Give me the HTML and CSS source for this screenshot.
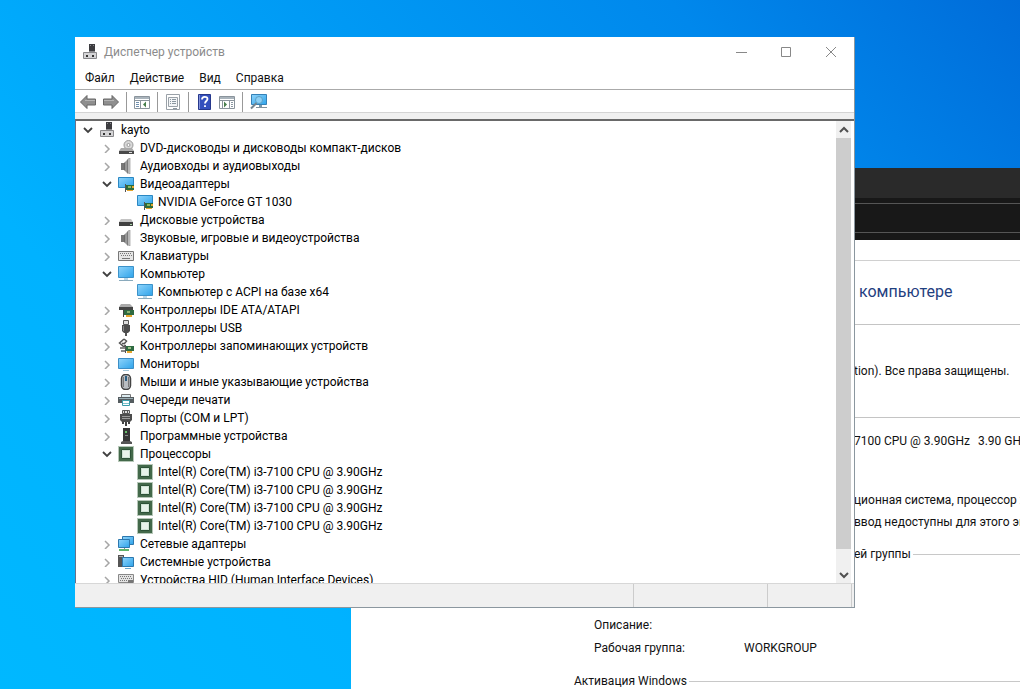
FILE: index.html
```html
<!DOCTYPE html>
<html lang="ru">
<head>
<meta charset="utf-8">
<title>Диспетчер устройств</title>
<link rel="stylesheet" href="styles.css">
</head>
<body>
<svg class="sprite" aria-hidden="true">
  <defs>
    <linearGradient id="screen" x1="0" y1="0" x2="1" y2="1"><stop offset="0" stop-color="#8fd4fb"/><stop offset="1" stop-color="#2ea3ea"/></linearGradient>
    <linearGradient id="metal" x1="0" y1="0" x2="1" y2="0"><stop offset="0" stop-color="#555"/><stop offset=".5" stop-color="#aaa"/><stop offset="1" stop-color="#666"/></linearGradient>
  </defs>
  <symbol id="i-manager" viewBox="0 0 16 16"><path fill="#3c3c40" d="M7 0h6v7H7z"/><path fill="#88888b" d="M8 1h1v1H8zM11 1h1v1h-1z"/><path fill="#8b8b8e" d="M7 7h6v2H7z"/><path fill="#d4d4d6" stroke="#88888b" d="M1.500 8.500h13v6h-13z"/><path fill="#333" d="M4 11h2v2H4zM10 11h2v2h-2z"/></symbol>
  <symbol id="i-dvd" viewBox="0 0 16 16"><circle cx="10.500" cy="5" r="4.500" fill="#d8d8d8" stroke="#999"/><circle cx="10.500" cy="5" r="1.500" fill="#fff" stroke="#999"/><path fill="#aaa" d="M3 8h11l2 3H1z"/><path fill="#4a4a4a" d="M1 11h15v3H1z"/><path fill="#ddd" d="M11 12h3v1h-3z"/></symbol>
  <symbol id="i-sound" viewBox="0 0 16 16"><path fill="#777" d="M3 5h3v7H3z"/><path fill="url(#metal)" d="M6 5l4-4v15l-4-4z"/><path fill="#ccc" stroke="#888" stroke-width=".6" d="M10 1l2-1v16l-2-1z"/></symbol>
  <symbol id="i-video" viewBox="0 0 16 16"><path fill="url(#screen)" stroke="#2b87c2" d="M.5 1.500h15v10H.5z"/><path fill="#2d6b3a" d="M8 9h8v5H8z"/><path fill="#8db763" d="M10 10h3v2h-3z"/><path fill="#e6a52d" d="M9 14h6v1H9zM14 10h2v2h-2z"/><path fill="#555" d="M7 8h1v8H7z"/></symbol>
  <symbol id="i-disk" viewBox="0 0 16 16"><path fill="#c3c3c3" d="M3 7h10l2 3H1z"/><path fill="#414141" d="M1 10h14v4H1z"/><path fill="#a8d6a8" d="M12 12h2v1h-2z"/></symbol>
  <symbol id="i-keyboard" viewBox="0 0 16 16"><path fill="#e6e6e6" stroke="#777" d="M.5 3.500h15v9H.5z"/><path stroke="#777" stroke-dasharray="1 1" d="M2 5.500h12M3 7.500h11"/><path stroke="#777" d="M4 10.500h8"/></symbol>
  <symbol id="i-computer" viewBox="0 0 16 16"><path fill="url(#screen)" stroke="#3c92c9" d="M.5.5h15v11H.5z"/><path fill="#bad7e8" d="M6 12h4v2H6z"/><path stroke="#8aaabc" d="M1 14.500h14"/></symbol>
  <symbol id="i-ide" viewBox="0 0 16 16"><path fill="#aaa" d="M3 2h9l3 3H1z"/><path fill="#444" d="M1 5h14v3H1z"/><path fill="#2f6b42" d="M6 8h10v5H6z"/><path fill="#88b071" d="M9 9h3v2H9z"/><path fill="#e6a52d" d="M8 13h6v2H8z"/><path fill="#444" d="M5 7h1v8H5z"/></symbol>
  <symbol id="i-usb" viewBox="0 0 16 16"><path fill="#ddd" stroke="#555" d="M5.500.5h5v4h-5z"/><path fill="#4c4c4c" d="M4 5h8v6l-2 2H6l-2-2z"/><path fill="#888" d="M5 6h1v5H5z"/><path fill="#555" d="M7 13h2v3H7z"/></symbol>
  <symbol id="i-storage" viewBox="0 0 16 16"><path fill="#eee" stroke="#555" stroke-width="1.500" d="M6 1L1.500 5 6 9l1.500-2M6 1l2.500 2-2 2.500H4"/><path fill="#888" d="M2 9h5v2H2zM3 12h4v2H3z"/><path fill="#2f6b42" d="M7 8h9v5H7z"/><path fill="#9bc083" d="M10 9h3v2h-3z"/><path fill="#e6a52d" d="M9 13h5v2H9z"/><path fill="#555" d="M7 7h1v8H7z"/></symbol>
  <symbol id="i-monitor" viewBox="0 0 16 16"><path fill="url(#screen)" stroke="#3c8ec6" d="M.5 2.500h15v10H.5z"/><path stroke="#a4c7da" d="M5 14.500h6"/></symbol>
  <symbol id="i-mouse" viewBox="0 0 16 16"><rect x="3.500" y=".5" width="9" height="15" rx="4" fill="#b9bdc2" stroke="#444" stroke-width="1.500"/><path fill="none" stroke="#777" d="M5.500 3v10M10.500 3v10"/><path stroke="#2c5e82" stroke-width="2" d="M8 2v5"/></symbol>
  <symbol id="i-printer" viewBox="0 0 16 16"><path fill="#dcebf0" stroke="#777" d="M3.500 2.500h9v4h-9z"/><path fill="#555c60" d="M0 5h16v6H0z"/><path fill="#9aaeb5" d="M1 6h14v1H1z"/><path fill="#fff" stroke="#3b9caa" d="M4.500 8.500h7v5h-7z"/><path stroke="#7cc4cf" d="M5 11.500h6"/></symbol>
  <symbol id="i-port" viewBox="0 0 16 16"><path fill="#ddd" stroke="#555" d="M4.500.5h7v3h-7z"/><path stroke="#555" d="M6.500 1v2M9.500 1v2"/><path fill="#4c4c4c" d="M2 4h12v6l-2 2H4l-2-2z"/><path fill="#999" d="M4 6h8v1H4zM4 8h8v1H4z"/><path fill="#444" d="M4 12h2v2H4zM7 12h2v4H7zM10 12h2v2h-2z"/></symbol>
  <symbol id="i-software" viewBox="0 0 16 16"><path fill="#353535" d="M5 0h7v13H5z"/><path fill="#67bc69" d="M7 3h2v2H7z"/><path fill="#888" d="M7 7h3v1H7z"/><path fill="#555" d="M3 14l2-1h7l2 1v2H3z"/></symbol>
  <symbol id="i-cpu" viewBox="0 0 16 16"><path fill="none" stroke="#6d8f70" stroke-dasharray="1 1" d="M.5.5h15v15H.5z"/><path fill="#43694a" d="M1 1h14v14H1z"/><path fill="#cfe3d4" stroke="#2d5237" d="M3.500 3.500h9v9h-9z"/><path fill="#e8f3ea" d="M5 5h6v6H5z"/></symbol>
  <symbol id="i-network" viewBox="0 0 16 16"><path fill="url(#screen)" stroke="#2d78ae" d="M4.500.5h11v8h-11z"/><path fill="url(#screen)" stroke="#2d78ae" d="M.5 3.500h11v8H.5z"/><path fill="#888" d="M6 12h1v2H6z"/><path stroke="#5fb46a" stroke-width="2" d="M1 14h10"/></symbol>
  <symbol id="i-system" viewBox="0 0 16 16"><path fill="#555" d="M0 1h6v12H0z"/><path fill="#aaa" d="M1 2h4v1H1z"/><path fill="url(#screen)" stroke="#2d78ae" d="M4.500 3.500h11v9h-11z"/><path stroke="#69a7ce" d="M7 14.500h6"/></symbol>
  <symbol id="i-hid" viewBox="0 0 16 16"><path fill="#e3e3e3" stroke="#888" d="M.5 2.500h15v8H.5z"/><path stroke="#777" stroke-dasharray="1 1" d="M2 4.500h12M3 6.500h11M2 8.500h12"/><path fill="#777" d="M10 8h5v7h-5z"/></symbol>
  <symbol id="i-open" viewBox="0 0 10 10"><path fill="none" stroke="#404040" stroke-width="1.800" d="M1 3l4 4 4-4"/></symbol>
  <symbol id="i-closed" viewBox="0 0 10 10"><path fill="none" stroke="#a6a6a6" stroke-width="1.500" d="M3 2l4 4-4 4"/></symbol>
  <symbol id="i-back" viewBox="0 0 16 16"><path fill="#8f8f8f" stroke="#666" d="M.5 8L7 1.500V5h8.500v6H7v3.500z"/><path stroke="#b5b5b5" d="M5 6.500h10"/></symbol>
  <symbol id="i-forward" viewBox="0 0 16 16"><path fill="#8f8f8f" stroke="#666" d="M15.500 8L9 1.500V5H.5v6H9v3.500z"/><path stroke="#b5b5b5" d="M1 6.500h10"/></symbol>
  <symbol id="i-tree" viewBox="0 0 16 16"><path fill="#fff" stroke="#8a949c" d="M.5 2.500h15v12H.5z"/><path fill="#aab4bc" d="M1 3h14v2H1z"/><path stroke="#8a949c" d="M1 6.500h14M6.500 7v7"/><path stroke="#6f8fae" d="M2 8.500h3M2 10.500h3M2 12.500h3"/><path fill="#477f4b" d="M9 10.500l3-3v6z"/></symbol>
  <symbol id="i-action" viewBox="0 0 16 16"><path fill="#fff" stroke="#8a949c" d="M.5 2.500h15v12H.5z"/><path fill="#aab4bc" d="M1 3h14v2H1z"/><path stroke="#8a949c" d="M1 6.500h14M10.500 7v7M3.500 7v7"/><path stroke="#8b98a2" d="M12 8.500h2M12 10.500h2M12 12.500h2"/><path fill="#477f4b" d="M8 10.500l-3-3v6z"/></symbol>
  <symbol id="i-properties" viewBox="0 0 16 16"><path fill="#fff" stroke="#9aa1a8" d="M1.500.5h13v15h-13z"/><path fill="#f3f5f7" stroke="#9aa1a8" d="M3.500 3.500h9v9h-9z"/><path stroke="#8a96a0" d="M5 5.500h1M7 5.500h4M5 7.500h1M7 7.500h4M5 9.500h1M7 9.500h4M8 14.500h4"/></symbol>
  <symbol id="i-help" viewBox="0 0 16 16"><path fill="#3450bd" stroke="#26388c" d="M2.500.5h12v15h-12z"/><path stroke="#8393dc" d="M3.500 1v14"/><path fill="none" stroke="#fff" stroke-width="1.800" d="M6 5.500C6 2 11.500 2 11.500 5c0 2-2.500 2-2.500 4.500M9 11.200v1.800"/></symbol>
  <symbol id="i-scan" viewBox="0 0 18 16"><path fill="url(#screen)" stroke="#3481b7" d="M1.500.5h15v10h-15z"/><path fill="#7a98aa" d="M9 11h3v2H9z"/><path stroke="#81919b" d="M6 13.500h11"/><circle cx="9" cy="6" r="3.500" fill="#8dd0f5" stroke="#5b9fc5"/><path stroke="#74848e" stroke-width="2" d="M6.500 9L1 14.500"/></symbol>
</svg>

<main class="desktop">
  <section class="about" aria-label="Система">
    <div class="about-tabs"></div>
    <div class="about-tools"><div class="about-address"></div></div>
    <div class="about-body">
      <h2 class="about-title">компьютере</h2>
      <p class="about-edition">tion). Все права защищены.</p>
      <div class="about-system">
        <p class="about-cpu"><span>7100 CPU @ 3.90GHz</span><span>3.90 GHz</span></p>
        <p class="about-line">ционная система, процессор x</p>
        <p class="about-line">ввод недоступны для этого экр</p>
      </div>
      <h3 class="about-group about-group-name">ей группы</h3>
      <dl class="about-facts">
        <dt>Описание:</dt><dd></dd>
        <dt>Рабочая группа:</dt><dd>WORKGROUP</dd>
      </dl>
      <h3 class="about-group">Активация Windows</h3>
    </div>
  </section>

  <section class="window" aria-label="Диспетчер устройств">
    <header class="titlebar">
      <svg class="icon"><use href="#i-manager"/></svg>
      <h1 class="title">Диспетчер устройств</h1>
      <div class="controls">
        <button class="control" aria-label="Свернуть"><svg class="glyph" viewBox="0 0 12 12"><path d="M1 6.500h11"/></svg></button>
        <button class="control" aria-label="Развернуть"><svg class="glyph" viewBox="0 0 12 12"><path d="M1.500 1.500h9v9h-9z"/></svg></button>
        <button class="control" aria-label="Закрыть"><svg class="glyph" viewBox="0 0 12 12"><path d="M1 1l10 10M11 1L1 11"/></svg></button>
      </div>
    </header>
    <nav class="menu">
      <button class="menu-item">Файл</button>
      <button class="menu-item">Действие</button>
      <button class="menu-item">Вид</button>
      <button class="menu-item">Справка</button>
    </nav>
    <div class="toolbar">
      <button class="tool" aria-label="Назад"><svg class="icon"><use href="#i-back"/></svg></button>
      <button class="tool" aria-label="Вперед"><svg class="icon"><use href="#i-forward"/></svg></button>
      <span class="divider"></span>
      <button class="tool" aria-label="Дерево консоли"><svg class="icon"><use href="#i-tree"/></svg></button>
      <span class="divider"></span>
      <button class="tool" aria-label="Свойства"><svg class="icon"><use href="#i-properties"/></svg></button>
      <span class="divider"></span>
      <button class="tool" aria-label="Справка"><svg class="icon"><use href="#i-help"/></svg></button>
      <button class="tool" aria-label="Панель действий"><svg class="icon"><use href="#i-action"/></svg></button>
      <span class="divider"></span>
      <button class="tool" aria-label="Обновить конфигурацию оборудования"><svg class="icon icon-wide"><use href="#i-scan"/></svg></button>
    </div>
    <div class="pane">
      <ul class="tree">
        <li><div class="row"><button class="toggle" aria-label="Свернуть"><svg class="chevron"><use href="#i-open"/></svg></button><svg class="icon"><use href="#i-manager"/></svg><span>kayto</span></div>
          <ul class="branch">
            <li><div class="row"><button class="toggle" aria-label="Развернуть"><svg class="chevron"><use href="#i-closed"/></svg></button><svg class="icon"><use href="#i-dvd"/></svg><span>DVD-дисководы и дисководы компакт-дисков</span></div></li>
            <li><div class="row"><button class="toggle" aria-label="Развернуть"><svg class="chevron"><use href="#i-closed"/></svg></button><svg class="icon"><use href="#i-sound"/></svg><span>Аудиовходы и аудиовыходы</span></div></li>
            <li><div class="row"><button class="toggle" aria-label="Свернуть"><svg class="chevron"><use href="#i-open"/></svg></button><svg class="icon"><use href="#i-video"/></svg><span>Видеоадаптеры</span></div>
              <ul class="branch">
                <li><div class="row row-leaf"><svg class="icon"><use href="#i-video"/></svg><span>NVIDIA GeForce GT 1030</span></div></li>
              </ul></li>
            <li><div class="row"><button class="toggle" aria-label="Развернуть"><svg class="chevron"><use href="#i-closed"/></svg></button><svg class="icon"><use href="#i-disk"/></svg><span>Дисковые устройства</span></div></li>
            <li><div class="row"><button class="toggle" aria-label="Развернуть"><svg class="chevron"><use href="#i-closed"/></svg></button><svg class="icon"><use href="#i-sound"/></svg><span>Звуковые, игровые и видеоустройства</span></div></li>
            <li><div class="row"><button class="toggle" aria-label="Развернуть"><svg class="chevron"><use href="#i-closed"/></svg></button><svg class="icon"><use href="#i-keyboard"/></svg><span>Клавиатуры</span></div></li>
            <li><div class="row"><button class="toggle" aria-label="Свернуть"><svg class="chevron"><use href="#i-open"/></svg></button><svg class="icon"><use href="#i-computer"/></svg><span>Компьютер</span></div>
              <ul class="branch">
                <li><div class="row row-leaf"><svg class="icon"><use href="#i-computer"/></svg><span>Компьютер с ACPI на базе x64</span></div></li>
              </ul></li>
            <li><div class="row"><button class="toggle" aria-label="Развернуть"><svg class="chevron"><use href="#i-closed"/></svg></button><svg class="icon"><use href="#i-ide"/></svg><span>Контроллеры IDE ATA/ATAPI</span></div></li>
            <li><div class="row"><button class="toggle" aria-label="Развернуть"><svg class="chevron"><use href="#i-closed"/></svg></button><svg class="icon"><use href="#i-usb"/></svg><span>Контроллеры USB</span></div></li>
            <li><div class="row"><button class="toggle" aria-label="Развернуть"><svg class="chevron"><use href="#i-closed"/></svg></button><svg class="icon"><use href="#i-storage"/></svg><span>Контроллеры запоминающих устройств</span></div></li>
            <li><div class="row"><button class="toggle" aria-label="Развернуть"><svg class="chevron"><use href="#i-closed"/></svg></button><svg class="icon"><use href="#i-monitor"/></svg><span>Мониторы</span></div></li>
            <li><div class="row"><button class="toggle" aria-label="Развернуть"><svg class="chevron"><use href="#i-closed"/></svg></button><svg class="icon"><use href="#i-mouse"/></svg><span>Мыши и иные указывающие устройства</span></div></li>
            <li><div class="row"><button class="toggle" aria-label="Развернуть"><svg class="chevron"><use href="#i-closed"/></svg></button><svg class="icon"><use href="#i-printer"/></svg><span>Очереди печати</span></div></li>
            <li><div class="row"><button class="toggle" aria-label="Развернуть"><svg class="chevron"><use href="#i-closed"/></svg></button><svg class="icon"><use href="#i-port"/></svg><span>Порты (COM и LPT)</span></div></li>
            <li><div class="row"><button class="toggle" aria-label="Развернуть"><svg class="chevron"><use href="#i-closed"/></svg></button><svg class="icon"><use href="#i-software"/></svg><span>Программные устройства</span></div></li>
            <li><div class="row"><button class="toggle" aria-label="Свернуть"><svg class="chevron"><use href="#i-open"/></svg></button><svg class="icon"><use href="#i-cpu"/></svg><span>Процессоры</span></div>
              <ul class="branch">
                <li><div class="row row-leaf"><svg class="icon"><use href="#i-cpu"/></svg><span>Intel(R) Core(TM) i3-7100 CPU @ 3.90GHz</span></div></li>
                <li><div class="row row-leaf"><svg class="icon"><use href="#i-cpu"/></svg><span>Intel(R) Core(TM) i3-7100 CPU @ 3.90GHz</span></div></li>
                <li><div class="row row-leaf"><svg class="icon"><use href="#i-cpu"/></svg><span>Intel(R) Core(TM) i3-7100 CPU @ 3.90GHz</span></div></li>
                <li><div class="row row-leaf"><svg class="icon"><use href="#i-cpu"/></svg><span>Intel(R) Core(TM) i3-7100 CPU @ 3.90GHz</span></div></li>
              </ul></li>
            <li><div class="row"><button class="toggle" aria-label="Развернуть"><svg class="chevron"><use href="#i-closed"/></svg></button><svg class="icon"><use href="#i-network"/></svg><span>Сетевые адаптеры</span></div></li>
            <li><div class="row"><button class="toggle" aria-label="Развернуть"><svg class="chevron"><use href="#i-closed"/></svg></button><svg class="icon"><use href="#i-system"/></svg><span>Системные устройства</span></div></li>
            <li><div class="row"><button class="toggle" aria-label="Развернуть"><svg class="chevron"><use href="#i-closed"/></svg></button><svg class="icon"><use href="#i-hid"/></svg><span>Устройства HID (Human Interface Devices)</span></div></li>
          </ul></li>
      </ul>
      <div class="scrollbar">
        <button class="scroll-button" aria-label="Вверх"><svg class="chevron" viewBox="0 0 10 10"><path class="scroll-arrow" d="M1 7l4-4 4 4"/></svg></button>
        <div class="scroll-thumb"></div>
        <button class="scroll-button" aria-label="Вниз"><svg class="chevron" viewBox="0 0 10 10"><path class="scroll-arrow" d="M1 3l4 4 4-4"/></svg></button>
      </div>
    </div>
    <footer class="status"><span class="status-main"></span><span class="status-cell"></span><span class="status-end"></span></footer>
  </section>
</main>
</body>
</html>
```
FILE: styles.css
```css
* { box-sizing: border-box; }
body, h1, h2, h3, p, ul, dl, dd { margin: 0; padding: 0; }
body, button { font: 12px/18px Roboto, "Open Sans", sans-serif; color: #111; }
button { margin: 0; padding: 0; border: 0; background: none; }
ul { list-style: none; }
svg { display: block; flex: none; }
.sprite { position: absolute; width: 0; height: 0; }

.desktop {
  position: relative;
  height: 100vh;
  overflow: hidden;
  background: linear-gradient(50deg, #00b8ff 0%, #00b2ff 25%, #009bf5 54%, #0088ec 78%, #006cd9 100%);
}

/* System information window, partly covered */
.about {
  position: absolute;
  top: 168px;
  right: 0;
  bottom: 0;
  left: 351px;
  overflow: hidden;
  background: #fff;
}
.about-tabs { height: 30px; background: #2a2a2a; }
.about-tools { height: 42px; padding: 5px 0 7px; background: #181818; }
.about-address { height: 30px; border: solid #555; border-width: 1px 0; }
.about-body { margin-top: 20px; border-top: 1px solid #d0d0d0; white-space: nowrap; }
.about-title {
  height: 64px;
  padding-left: 508px;
  border-bottom: 1px solid #c4c4c4;
  font-size: 16px;
  font-weight: 400;
  line-height: 62px;
  color: #1f4080;
}
.about-edition { height: 93px; padding-left: 503px; border-bottom: 1px solid #c4c4c4; line-height: 92px; }
.about-system { padding: 12px 0 0 503px; line-height: 22px; }
.about-cpu { display: flex; gap: 8px; margin-bottom: 37px; }
.about-group { display: flex; align-items: center; gap: 2px; padding-left: 223px; font-size: 12px; font-weight: 400; line-height: 22px; }
.about-group::after { content: ""; flex: 1; height: 1px; background: #c8c8c8; }
.about-group-name { margin-top: 10px; padding-left: 503px; }
.about-facts { display: grid; grid-template-columns: 150px 1fr; padding: 49px 0 10px 243px; line-height: 23px; }

/* Device manager window */
.window {
  position: absolute;
  top: 37px;
  right: 165px;
  bottom: 81px;
  left: 75px;
  display: flex;
  flex-direction: column;
  border: solid #8b979f;
  border-width: 0 1px 1px 0;
  background: #fff;
}
.icon { width: 16px; height: 16px; }
.icon-wide { width: 18px; }
.titlebar { display: flex; align-items: center; height: 29px; flex: none; padding: 0 1px 0 7px; gap: 6px; }
.title { flex: 1; font-size: 12px; font-weight: 400; color: #8b8b8b; }
.controls { display: flex; }
.control { display: flex; align-items: center; justify-content: center; width: 45px; height: 29px; }
.glyph { width: 12px; height: 12px; fill: none; stroke: #888; }
.menu { display: flex; flex: none; height: 24px; padding-left: 10px; gap: 15px; border-bottom: 1px solid #aaa; }
.toolbar { display: flex; align-items: center; flex: none; height: 23px; padding: 1px 0 0 5px; border-bottom: 1px solid #d4d4d4; gap: 7px; }
.divider { width: 1px; height: 20px; background: #999; }

.pane {
  display: flex;
  flex: 1;
  min-height: 0;
  margin-top: 6px;
  border-top: 2px solid #696969;
  border-left: 1px solid #697089;
  box-shadow: 0 -6px #f0f0f0;
  overflow: hidden;
}
.tree { flex: 1; overflow: hidden; white-space: nowrap; color: #000; }
.branch { padding-left: 19px; }
.row { display: flex; align-items: center; gap: 5px; height: 18px; padding-left: 7px; }
.row-leaf { padding-left: 23px; }
.toggle { display: flex; }
.row .icon { margin-right: 1px; }
.toggle + .icon { margin-left: 1px; }
.chevron { width: 10px; height: 10px; overflow: visible; }
.row-leaf .icon { margin-right: 0; }
.scrollbar { display: flex; flex-direction: column; width: 15px; margin-right: 3px; background: #f0f0f0; }
.scroll-button { display: flex; align-items: center; justify-content: center; height: 17px; }
.scroll-thumb { flex: 0 1 411px; margin-bottom: auto; background: #cdcdcd; }
.scroll-arrow { fill: none; stroke: #505050; stroke-width: 2; }
.status { display: flex; flex: none; height: 24px; border-top: 1px solid #d7d7d7; background: #f0f0f0; }
.status span { border-right: 1px solid #ccc; }
.status-main { flex: 1; }
.status-cell { width: 134px; }
.status-end { width: 84px; margin-right: 2px; }
```
